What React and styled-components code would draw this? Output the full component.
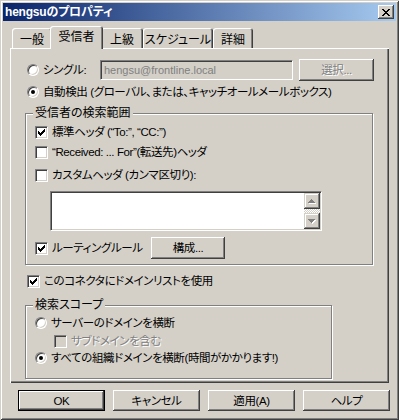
import React from 'react';
import styled, { createGlobalStyle, css } from 'styled-components';

const FACE = '#D4D0C8';
const SHADOW = '#808080';
const DARK = '#404040';
const LIGHT = '#FFFFFF';

const Global = createGlobalStyle`
  html, body { margin: 0; padding: 0; background: ${FACE}; }
  * { box-sizing: border-box; }
`;

const Window = styled.div`
  width: 399px;
  height: 420px;
  background: ${FACE};
  box-shadow: inset 1px 1px ${FACE}, inset -1px -1px ${DARK}, inset 2px 2px ${LIGHT}, inset -2px -2px ${SHADOW};
  display: flex;
  flex-direction: column;
  font-family: "Liberation Sans", "Noto Sans CJK JP", sans-serif;
  font-size: 11.5px;
  letter-spacing: -0.4px;
  font-feature-settings: "palt";
  color: #000;
  overflow: hidden;
`;

const TitleBar = styled.div`
  margin: 3px 3px 0;
  height: 18px;
  flex: none;
  background: linear-gradient(to right, #0A246A, #A6CAF0);
  display: flex;
  align-items: center;
  justify-content: space-between;
  padding: 0 2px 0 2px;
`;

const TitleText = styled.span`
  color: #fff;
  font-weight: bold;
  font-size: 12px;
  letter-spacing: -0.2px;
  line-height: 18px;
  white-space: nowrap;
`;

const CloseButton = styled.div`
  width: 16px;
  height: 14px;
  background: ${FACE};
  box-shadow: inset -1px -1px ${DARK}, inset 1px 1px ${LIGHT}, inset -2px -2px ${SHADOW};
  display: flex;
  align-items: center;
  justify-content: center;
  padding-right: 1px;
`;

const TabStrip = styled.div`
  margin-top: 5px;
  height: 22px;
  flex: none;
  display: flex;
  align-items: flex-end;
  padding-left: 12px;
`;

const Tab = styled.div`
  position: relative;
  flex: none;
  width: ${(p) => p.$w}px;
  height: ${(p) => (p.$active ? 23 : 20)}px;
  margin: 0 ${(p) => (p.$active ? -2 : 0)}px ${(p) => (p.$active ? -1 : 0)}px;
  z-index: ${(p) => (p.$active ? 1 : 0)};
  background: ${FACE};
  border-radius: 3px 3px 0 0;
  box-shadow: inset 1px 1px ${LIGHT}, inset -1px 0 ${DARK}, inset -2px 0 ${SHADOW};
  display: flex;
  justify-content: center;
  padding-top: ${(p) => (p.$active ? 4 : 5)}px;
  font-size: 12px;
  letter-spacing: 0;
  line-height: 14px;
  white-space: nowrap;
`;

const Panel = styled.div`
  margin: 0 10px;
  height: 335px;
  flex: none;
  box-shadow: inset 1px 1px ${LIGHT}, inset -1px -1px ${DARK}, inset -2px -2px ${SHADOW};
  padding: 11px 0 0 15px;
  display: flex;
  flex-direction: column;
`;

const Row = styled.div`
  display: flex;
  align-items: center;
  flex: none;
  height: ${(p) => p.$h || 16}px;
  margin-top: ${(p) => p.$mt || 0}px;
  margin-left: ${(p) => p.$ml || 0}px;
`;

const Radio = styled.span`
  flex: none;
  width: 12px;
  height: 12px;
  border-radius: 50%;
  border: 1px solid;
  border-color: ${SHADOW} ${LIGHT} ${LIGHT} ${SHADOW};
  box-shadow: inset 1px 1px ${DARK}, inset -1px -1px ${FACE};
  background: #fff;
  display: flex;
  align-items: center;
  justify-content: center;
  &::after {
    content: '';
    width: 4px;
    height: 4px;
    border-radius: 50%;
    background: #000;
    display: ${(p) => (p.$checked ? 'block' : 'none')};
  }
`;

const Check = styled.span`
  flex: none;
  width: 13px;
  height: 13px;
  border: 1px solid;
  border-color: ${SHADOW} ${LIGHT} ${LIGHT} ${SHADOW};
  box-shadow: inset 1px 1px ${DARK}, inset -1px -1px ${FACE};
  background: ${(p) => (p.$disabled ? FACE : '#fff')};
  display: flex;
  align-items: center;
  justify-content: center;
`;

const Label = styled.span`
  flex: none;
  margin-left: 4px;
  width: ${(p) => (p.$w ? `${p.$w}px` : 'auto')};
  white-space: nowrap;
  line-height: 16px;
  color: ${(p) => (p.$disabled ? SHADOW : '#000')};
  text-shadow: ${(p) => (p.$disabled ? `1px 1px ${LIGHT}` : 'none')};
`;

const TextBox = styled.div`
  flex: none;
  width: 193px;
  height: 20px;
  border: 1px solid;
  border-color: ${SHADOW} ${LIGHT} ${LIGHT} ${SHADOW};
  box-shadow: inset 1px 1px ${DARK}, inset -1px -1px ${FACE};
  background: ${FACE};
  color: ${SHADOW};
  font-size: 11px;
  letter-spacing: 0;
  line-height: 18px;
  padding-left: 3px;
  white-space: nowrap;
  overflow: hidden;
`;

const raised = css`
  box-shadow: inset -1px -1px ${DARK}, inset 1px 1px ${LIGHT}, inset -2px -2px ${SHADOW};
`;

const Button = styled.div`
  flex: none;
  width: ${(p) => p.$w}px;
  height: ${(p) => p.$h}px;
  margin-left: ${(p) => p.$ml || 0}px;
  background: ${FACE};
  display: flex;
  align-items: center;
  justify-content: center;
  white-space: nowrap;
  line-height: 14px;
  ${(p) => (p.$default ? css`border: 1px solid #000;` : '')}
  ${raised}
  color: ${(p) => (p.$disabled ? SHADOW : '#000')};
  text-shadow: ${(p) => (p.$disabled ? `1px 1px ${LIGHT}` : 'none')};
`;

const Group = styled.div`
  position: relative;
  flex: none;
  width: ${(p) => p.$w}px;
  height: ${(p) => p.$h}px;
  margin-top: ${(p) => p.$mt}px;
  border: 1px solid ${SHADOW};
  box-shadow: inset 1px 1px ${LIGHT}, 1px 1px ${LIGHT};
  padding: ${(p) => p.$pt}px 0 0 9px;
  display: flex;
  flex-direction: column;
`;

const Caption = styled.span`
  position: absolute;
  top: -9px;
  left: 7px;
  padding: 0 2px;
  background: ${FACE};
  line-height: 16px;
  letter-spacing: 0;
  font-size: 12px;
  white-space: nowrap;
`;

const TextArea = styled.div`
  flex: none;
  width: 272px;
  height: 40px;
  margin: 8px 0 0 15px;
  border: 1px solid;
  border-color: ${SHADOW} ${LIGHT} ${LIGHT} ${SHADOW};
  box-shadow: inset 1px 1px ${DARK}, inset -1px -1px ${FACE};
  background: #fff;
  padding: 1px;
  display: flex;
  justify-content: flex-end;
`;

const ScrollBar = styled.div`
  width: 16px;
  display: flex;
  flex-direction: column;
`;

const ScrollButton = styled.div`
  flex: none;
  height: 16px;
  background: ${FACE};
  box-shadow: inset -1px -1px ${DARK}, inset 1px 1px ${FACE}, inset -2px -2px ${SHADOW}, inset 2px 2px ${LIGHT};
  display: flex;
  align-items: center;
  justify-content: center;
`;

const ScrollTrack = styled.div`
  flex: 1;
  background: repeating-conic-gradient(${LIGHT} 0 25%, ${FACE} 0 50%) 0 0 / 2px 2px;
`;

const ButtonBar = styled.div`
  display: flex;
  gap: 8px;
  margin: 7px 0 0 18px;
`;

const CheckGlyph = () => (
  <svg width="7" height="7" viewBox="0 0 7 7" shapeRendering="crispEdges">
    {[2, 3, 4, 3, 2, 1, 0].map((y, x) => (
      <rect key={x} x={x} y={y} width="1" height="3" fill="#000" />
    ))}
  </svg>
);

const XGlyph = () => {
  const rows = [
    [0, 1, 6, 7],
    [1, 2, 5, 6],
    [2, 3, 4, 5],
    [3, 4],
    [2, 3, 4, 5],
    [1, 2, 5, 6],
    [0, 1, 6, 7],
  ];
  return (
    <svg width="8" height="7" viewBox="0 0 8 7" shapeRendering="crispEdges">
      {rows.map((cols, y) =>
        cols.map((x) => <rect key={`${x}-${y}`} x={x} y={y} width="1" height="1" fill="#000" />)
      )}
    </svg>
  );
};

const Arrow = ({ down }) => {
  const rows = down ? [[0, 7], [1, 5], [2, 3], [3, 1]] : [[3, 1], [2, 3], [1, 5], [0, 7]];
  return (
    <svg width="8" height="5" viewBox="0 0 8 5" shapeRendering="crispEdges">
      {rows.map(([x, w], y) => (
        <rect key={`w${y}`} x={x + 1} y={y + 1} width={w} height="1" fill={LIGHT} />
      ))}
      {rows.map(([x, w], y) => (
        <rect key={`g${y}`} x={x} y={y} width={w} height="1" fill={SHADOW} />
      ))}
    </svg>
  );
};

const CheckBox = ({ checked, disabled }) => (
  <Check $disabled={disabled}>{checked && <CheckGlyph />}</Check>
);

const tabs = [
  { label: '一般', w: 40 },
  { label: '受信者', w: 53, active: true },
  { label: '上級', w: 42 },
  { label: 'スケジュール', w: 70 },
  { label: '詳細', w: 40 },
];

export default function App() {
  return (
    <>
      <Global />
      <Window>
        <TitleBar>
          <TitleText>hengsuのプロパティ</TitleText>
          <CloseButton>
            <XGlyph />
          </CloseButton>
        </TitleBar>

        <TabStrip>
          {tabs.map((t) => (
            <Tab key={t.label} $w={t.w} $active={t.active}>
              {t.label}
            </Tab>
          ))}
        </TabStrip>

        <Panel>
          <Row $h={22} $ml={2}>
            <Radio />
            <Label $w={57}>シングル:</Label>
            <TextBox>hengsu@frontline.local</TextBox>
            <Button $w={75} $h={22} $ml={6} $disabled>
              選択...
            </Button>
          </Row>
          <Row $mt={3} $ml={2}>
            <Radio $checked />
            <Label>自動検出 (グローバル、または、キャッチオールメールボックス)</Label>
          </Row>

          <Group $w={348} $h={152} $mt={13} $pt={10}>
            <Caption>受信者の検索範囲</Caption>
            <Row>
              <CheckBox checked />
              <Label>標準ヘッダ (“To:”, “CC:”)</Label>
            </Row>
            <Row $mt={4}>
              <CheckBox />
              <Label>“Received: ... For”(転送先)ヘッダ</Label>
            </Row>
            <Row $mt={7}>
              <CheckBox />
              <Label>カスタムヘッダ (カンマ区切り):</Label>
            </Row>
            <TextArea>
              <ScrollBar>
                <ScrollButton>
                  <Arrow />
                </ScrollButton>
                <ScrollTrack />
                <ScrollButton>
                  <Arrow down />
                </ScrollButton>
              </ScrollBar>
            </TextArea>
            <Row $h={22} $mt={6}>
              <CheckBox checked />
              <Label $w={99}>ルーティングルール</Label>
              <Button $w={74} $h={22}>
                構成...
              </Button>
            </Row>
          </Group>

          <Row $mt={8} $ml={2}>
            <CheckBox checked />
            <Label>このコネクタにドメインリストを使用</Label>
          </Row>

          <Group $w={307} $h={74} $mt={16} $pt={9}>
            <Caption>検索スコープ</Caption>
            <Row>
              <Radio />
              <Label>サーバーのドメインを横断</Label>
            </Row>
            <Row $mt={2} $ml={19}>
              <CheckBox disabled />
              <Label $disabled>サブドメインを含む</Label>
            </Row>
            <Row $mt={1}>
              <Radio $checked />
              <Label>すべての組織ドメインを横断(時間がかかります!)</Label>
            </Row>
          </Group>
        </Panel>

        <ButtonBar>
          <Button $w={87} $h={21} $default>
            OK
          </Button>
          <Button $w={87} $h={21}>
            キャンセル
          </Button>
          <Button $w={87} $h={21}>
            適用(A)
          </Button>
          <Button $w={87} $h={21}>
            ヘルプ
          </Button>
        </ButtonBar>
      </Window>
    </>
  );
}
